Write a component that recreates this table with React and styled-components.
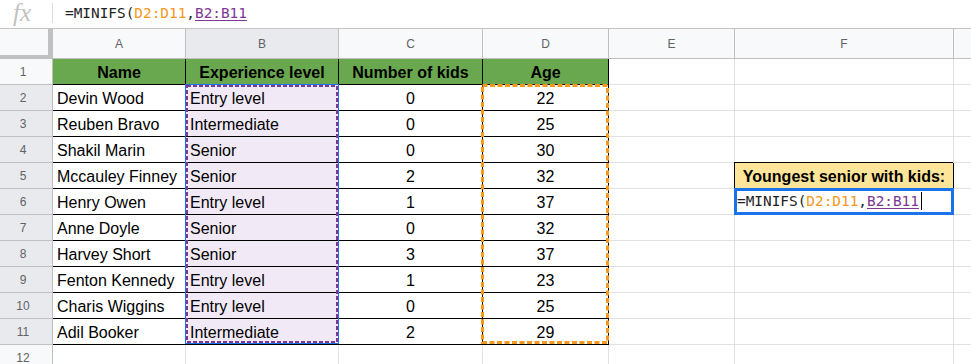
import React from 'react';
import styled, { createGlobalStyle } from 'styled-components';

const GlobalStyle = createGlobalStyle`
  html, body { margin: 0; padding: 0; background: #fff; overflow: hidden; }
  body { font-family: "Liberation Sans", Arial, sans-serif; }
  #root { width: 971px; height: 364px; overflow: hidden; }
`;

const ORANGE = '#f7981d';
const PURPLE = '#7e3794';
const BLUE = '#1a73e8';

const FormulaBar = styled.div`
  display: flex;
  align-items: center;
  height: 28px;
  border-bottom: 1px solid #c4c4c4;
  box-sizing: content-box;
`;

const FxLabel = styled.div`
  width: 52px;
  height: 28px;
  display: flex;
  align-items: center;
  justify-content: center;
  padding: 0 10px 4px 2px;
  box-sizing: border-box;
  font-family: "Liberation Serif", "Times New Roman", serif;
  font-style: italic;
  font-size: 25px;
  color: #c2c2c2;
  line-height: 1;
`;

const Divider = styled.div`
  width: 1px;
  height: 20px;
  background: #dadce0;
  margin-top: -2px;
`;

const Mono = styled.div`
  font-family: "DejaVu Sans Mono", "Liberation Mono", monospace;
  font-size: 14.4px;
  color: #222;
  white-space: nowrap;
`;

const FormulaText = styled(Mono)`
  margin-left: 12px;
  margin-top: -3px;
`;

const Ref = styled.span`
  color: ${(p) => p.$color};
  text-decoration: ${(p) => (p.$underline ? 'underline' : 'none')};
  text-underline-offset: 2px;
`;

const Sheet = styled.div`
  position: relative;
  display: grid;
  grid-template-columns: 53px 133px 153px 144px 126px 126px 219px 60px;
  grid-template-rows: 30px repeat(12, 26px);
`;

const Corner = styled.div`
  background: #f8f9fa;
  border-right: 5px solid #c0c0c0;
  border-bottom: 4px solid #c0c0c0;
  box-sizing: border-box;
`;

const ColHeader = styled.div`
  background: ${(p) => (p.$active ? '#e8eaed' : '#f8f9fa')};
  border-right: 1px solid #c0c0c0;
  border-bottom: 1px solid #c0c0c0;
  box-sizing: border-box;
  display: flex;
  align-items: center;
  justify-content: center;
  font-size: 12px;
  color: #5f6368;
  padding-top: 1px;
`;

const RowHeader = styled.div`
  background: ${(p) => (p.$active ? '#e8eaed' : '#f8f9fa')};
  border-right: 1px solid #c0c0c0;
  border-bottom: 1px solid #c0c0c0;
  box-sizing: border-box;
  display: flex;
  align-items: center;
  justify-content: center;
  padding-right: 6px;
  padding-top: 1px;
  font-size: 12px;
  color: #5f6368;
`;

const Cell = styled.div`
  box-sizing: border-box;
  border-right: 1px solid ${(p) => (p.$table ? '#000' : '#e2e2e3')};
  border-bottom: 1px solid ${(p) => (p.$table ? '#000' : '#e2e2e3')};
  background: ${(p) => p.$bg || '#fff'};
  box-shadow: ${(p) => (p.$boxed ? '-1px -1px 0 0 #000' : 'none')};
  border-color: ${(p) => (p.$boxed ? '#000' : undefined)};
  display: flex;
  align-items: center;
  justify-content: ${(p) => (p.$align === 'center' ? 'center' : 'flex-start')};
  padding: 2px 4px 0;
  font-size: 16px;
  font-weight: ${(p) => (p.$bold ? 700 : 400)};
  color: #000;
  white-space: nowrap;
  overflow: hidden;
`;

const Overlay = styled.svg`
  position: absolute;
  pointer-events: none;
  overflow: visible;
`;

const EditBox = styled.div`
  position: absolute;
  left: 734px;
  top: 159px;
  width: 220px;
  height: 27px;
  box-sizing: border-box;
  border: 3px solid ${BLUE};
  background: #fff;
  display: flex;
  align-items: center;
  padding-bottom: 1px;
`;

const Caret = styled.span`
  display: inline-block;
  width: 1px;
  height: 18px;
  background: #000;
  margin-left: 2px;
  vertical-align: -4px;
`;

const DATA = [
  ['Devin Wood', 'Entry level', 0, 22],
  ['Reuben Bravo', 'Intermediate', 0, 25],
  ['Shakil Marin', 'Senior', 0, 30],
  ['Mccauley Finney', 'Senior', 2, 32],
  ['Henry Owen', 'Entry level', 1, 37],
  ['Anne Doyle', 'Senior', 0, 32],
  ['Harvey Short', 'Senior', 3, 37],
  ['Fenton Kennedy', 'Entry level', 1, 23],
  ['Charis Wiggins', 'Entry level', 0, 25],
  ['Adil Booker', 'Intermediate', 2, 29],
];

const HEAD = ['Name', 'Experience level', 'Number of kids', 'Age'];
const COL_LETTERS = ['A', 'B', 'C', 'D', 'E', 'F', ''];

function Formula() {
  return (
    <>
      =MINIFS(<Ref $color={ORANGE}>D2:D11</Ref>,<Ref $color={PURPLE} $underline>B2:B11</Ref>
    </>
  );
}

function RangeBox({ left, top, width, height, color, stroke, dash, outline }) {
  const inset = outline ? 1 : 0;
  return (
    <Overlay style={{ left, top }} width={width} height={height}>
      {outline && (
        <rect x={0.5} y={0.5} width={width - 1} height={height - 1} fill="none" stroke={outline} strokeWidth={1} />
      )}
      <rect
        x={inset + stroke / 2}
        y={inset + stroke / 2}
        width={width - 2 * inset - stroke}
        height={height - 2 * inset - stroke}
        fill="none"
        stroke={color}
        strokeWidth={stroke}
        strokeDasharray={dash}
      />
    </Overlay>
  );
}

function renderRow(r) {
  const cells = [];
  const active = r >= 2 && r <= 11;
  cells.push(
    <RowHeader key={`h${r}`} $active={active}>
      {r}
    </RowHeader>
  );
  for (let c = 0; c < 7; c++) {
    const inTable = r <= 11 && c <= 3;
    let content = '';
    let props = { $table: inTable };
    if (r === 1 && c <= 3) {
      content = HEAD[c];
      props = { ...props, $bg: '#6aa84f', $bold: true, $align: 'center' };
    } else if (inTable) {
      content = DATA[r - 2][c];
      props = { ...props, $align: c >= 2 ? 'center' : 'left' };
      if (c === 1) props.$bg = '#f1e9f5';
    }
    if (r === 5 && c === 5) {
      content = 'Youngest senior with kids:';
      props = { ...props, $bg: '#ffe599', $bold: true, $align: 'center', $boxed: true };
    }
    cells.push(
      <Cell key={`c${r}-${c}`} {...props}>
        {content}
      </Cell>
    );
  }
  return cells;
}

export default function App() {
  const rows = [];
  for (let r = 1; r <= 12; r++) rows.push(...renderRow(r));
  return (
    <>
      <GlobalStyle />
      <FormulaBar>
        <FxLabel>fx</FxLabel>
        <Divider />
        <FormulaText>
          <Formula />
        </FormulaText>
      </FormulaBar>
      <Sheet>
        <Corner />
        {COL_LETTERS.map((l, i) => (
          <ColHeader key={i} $active={l === 'B'}>
            {l}
          </ColHeader>
        ))}
        {rows}
        <RangeBox left={185} top={55} width={154} height={260} color={PURPLE} stroke={2} dash="4 2" outline={BLUE} />
        <RangeBox left={481} top={55} width={128} height={260} color={ORANGE} stroke={3} dash="5 2.5" />
        <EditBox>
          <Mono>
            <Formula />
            <Caret />
          </Mono>
        </EditBox>
      </Sheet>
    </>
  );
}
